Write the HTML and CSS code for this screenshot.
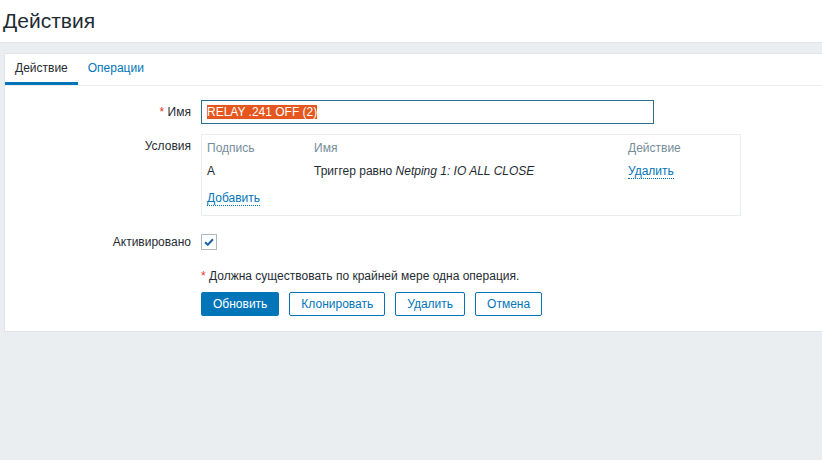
FILE: index.html
```html
<!DOCTYPE html>
<html lang="ru">
<head>
    <meta charset="UTF-8">
    <title>Действия</title>
    <link rel="stylesheet" href="styles.css">
</head>
<body>

    <!-- Page header -->
    <div class="header">
        <h1>Действия</h1>
    </div>

    <div class="wrapper">
        <div class="panel">

            <!-- Tabs -->
            <ul class="tabs">
                <li class="tab active">Действие</li>
                <li class="tab"><a href="#">Операции</a></li>
            </ul>

            <div class="form">
                <div class="form-row row-name">
                    <label class="form-label"><span class="req">*</span> Имя</label>
                    <div class="form-field">
                        <div class="text-input"><span class="selected">RELAY .241 OFF (2)</span></div>
                    </div>
                </div>

                <div class="form-row row-conditions">
                    <label class="form-label">Условия</label>
                    <div class="form-field">
                        <div class="conditions">
                            <table>
                                <thead>
                                    <tr>
                                        <th class="col-tag">Подпись</th>
                                        <th class="col-name">Имя</th>
                                        <th>Действие</th>
                                    </tr>
                                </thead>
                                <tbody>
                                    <tr>
                                        <td>A</td>
                                        <td>Триггер равно <em>Netping 1: IO ALL CLOSE</em></td>
                                        <td><a href="#" class="link">Удалить</a></td>
                                    </tr>
                                </tbody>
                            </table>
                            <a href="#" class="link add-link">Добавить</a>
                        </div>
                    </div>
                </div>

                <div class="form-row row-enabled">
                    <label class="form-label">Активировано</label>
                    <div class="form-field">
                        <span class="checkbox">
                            <svg width="10" height="8" viewBox="0 0 10 8">
                                <path d="M1 4.2 L3.8 6.8 L9 1.2" fill="none" stroke="#1f65a6" stroke-width="2"/>
                            </svg>
                        </span>
                    </div>
                </div>

                <div class="form-row row-note">
                    <div class="form-label"></div>
                    <div class="form-field note"><span class="req">*</span> Должна существовать по крайней мере одна операция.</div>
                </div>

                <div class="form-row row-buttons">
                    <div class="form-label"></div>
                    <div class="form-field buttons">
                        <button class="btn btn-main">Обновить</button>
                        <button class="btn">Клонировать</button>
                        <button class="btn">Удалить</button>
                        <button class="btn">Отмена</button>
                    </div>
                </div>
            </div>

        </div>
    </div>

</body>
</html>
```

FILE: styles.css
```css
/* General */
* {
    margin: 0;
    padding: 0;
    box-sizing: border-box;
}

body {
    font-family: 'Liberation Sans', Arial, sans-serif;
    font-size: 12px;
    color: #1f2c33;
    background: #ebeef0;
    height: 460px;
    overflow: hidden;
}

/* Header */
.header {
    background: #fff;
    height: 43px;
    border-bottom: 1px solid #dfe4e7;
}

.header h1 {
    font-size: 21px;
    font-weight: normal;
    line-height: 42px;
    padding-left: 3px;
    color: #1f2c33;
}

.wrapper {
    padding: 10px 0 0 4px;
}

.panel {
    background: #fff;
    border: 1px solid #dfe4e7;
    border-right: none;
    padding-bottom: 15px;
}

/* Tabs */
.tabs {
    list-style: none;
    display: flex;
    border-bottom: 1px solid #ebeef0;
    height: 32px;
}

.tab {
    padding: 0 10px;
    line-height: 29px;
    border-bottom: 3px solid transparent;
}

.tab.active {
    border-bottom-color: #0275b8;
}

.tab a {
    color: #0275b8;
    text-decoration: none;
}

/* Form */
.form {
    padding-top: 14px;
}

.form-row {
    display: flex;
    align-items: flex-start;
    margin-bottom: 10px;
}

.form-label {
    width: 186px;
    flex-shrink: 0;
    text-align: right;
    margin-right: 10px;
    line-height: 24px;
}

.req {
    color: #e33734;
}

.text-input {
    width: 453px;
    height: 24px;
    border: 1px solid #2a6d8c;
    padding: 0 5px;
    line-height: 22px;
}

.selected {
    background: #e5571f;
    color: #fff;
}

/* Conditions block */
.conditions {
    width: 540px;
    border: 1px solid #ebeef0;
    padding: 5px 5px 9px;
}

.conditions table {
    border-collapse: collapse;
    width: 100%;
}

.conditions th {
    text-align: left;
    font-weight: normal;
    color: #768d99;
    line-height: 16px;
}

.conditions td {
    line-height: 16px;
    padding: 7px 0;
}

.col-tag {
    width: 107px;
}

.col-name {
    width: 314px;
}

.link {
    color: #0275b8;
    text-decoration: none;
    border-bottom: 1px dotted #0275b8;
}

.add-link {
    display: inline-block;
    line-height: 14px;
    margin-top: 5px;
}

.conditions em {
    font-style: italic;
}

/* Checkbox */
.row-enabled {
    margin-top: 14px;
}

.checkbox {
    display: flex;
    align-items: center;
    justify-content: center;
    width: 16px;
    height: 16px;
    margin-top: 4px;
    border: 1px solid #acbbc2;
    background: #fff;
}

.row-note {
    margin-top: 2px;
    margin-bottom: 4px;
}

.note {
    line-height: 24px;
}

/* Buttons */
.row-buttons {
    margin-bottom: 0;
}

.buttons {
    display: flex;
    gap: 10px;
}

.btn {
    font-family: inherit;
    font-size: 12px;
    height: 24px;
    padding: 0 11px;
    background: #fff;
    color: #0275b8;
    border: 1px solid #0275b8;
    border-radius: 2px;
    cursor: pointer;
}

.btn-main {
    background: #0275b8;
    color: #fff;
}
```
